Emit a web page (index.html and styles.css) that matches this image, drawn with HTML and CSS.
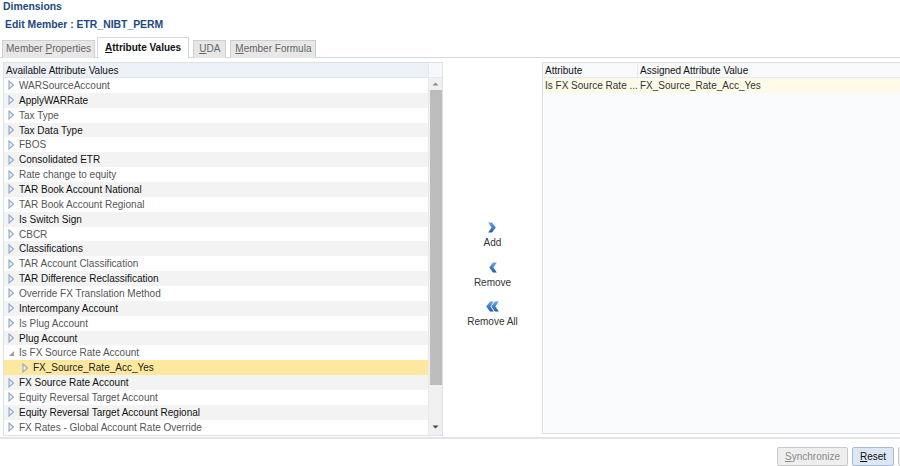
FILE: index.html
```html
<!DOCTYPE html>
<html>
<head>
<meta charset="utf-8">
<link rel="stylesheet" href="styles.css">
</head>
<body>
<div class="page">
  <div class="title">Dimensions</div>
  <div class="subtitle">Edit Member : ETR_NIBT_PERM</div>
  <div class="tabs">
    <div class="tab first">Member <u>P</u>roperties</div>
    <div class="tab active"><u>A</u>ttribute Values</div>
    <div class="tab uda"><u>U</u>DA</div>
    <div class="tab"><u>M</u>ember Formula</div>
  </div>
  <div class="main">
    <div class="left">
      <div class="listcol">
        <div class="lhead">Available Attribute Values</div>
        <div class="rows">
          <div class="row"><svg class="arr" width="7" height="10" viewBox="0 0 7 10"><path d="M1 1 L5.5 5 L1 9 Z" fill="#eaf1f9" stroke="#8fa9c8" stroke-width="1.1"/></svg><span>WARSourceAccount</span></div>
          <div class="row alt"><svg class="arr" width="7" height="10" viewBox="0 0 7 10"><path d="M1 1 L5.5 5 L1 9 Z" fill="#eaf1f9" stroke="#8fa9c8" stroke-width="1.1"/></svg><span>ApplyWARRate</span></div>
          <div class="row"><svg class="arr" width="7" height="10" viewBox="0 0 7 10"><path d="M1 1 L5.5 5 L1 9 Z" fill="#eaf1f9" stroke="#8fa9c8" stroke-width="1.1"/></svg><span>Tax Type</span></div>
          <div class="row alt"><svg class="arr" width="7" height="10" viewBox="0 0 7 10"><path d="M1 1 L5.5 5 L1 9 Z" fill="#eaf1f9" stroke="#8fa9c8" stroke-width="1.1"/></svg><span>Tax Data Type</span></div>
          <div class="row"><svg class="arr" width="7" height="10" viewBox="0 0 7 10"><path d="M1 1 L5.5 5 L1 9 Z" fill="#eaf1f9" stroke="#8fa9c8" stroke-width="1.1"/></svg><span>FBOS</span></div>
          <div class="row alt"><svg class="arr" width="7" height="10" viewBox="0 0 7 10"><path d="M1 1 L5.5 5 L1 9 Z" fill="#eaf1f9" stroke="#8fa9c8" stroke-width="1.1"/></svg><span>Consolidated ETR</span></div>
          <div class="row"><svg class="arr" width="7" height="10" viewBox="0 0 7 10"><path d="M1 1 L5.5 5 L1 9 Z" fill="#eaf1f9" stroke="#8fa9c8" stroke-width="1.1"/></svg><span>Rate change to equity</span></div>
          <div class="row alt"><svg class="arr" width="7" height="10" viewBox="0 0 7 10"><path d="M1 1 L5.5 5 L1 9 Z" fill="#eaf1f9" stroke="#8fa9c8" stroke-width="1.1"/></svg><span>TAR Book Account National</span></div>
          <div class="row"><svg class="arr" width="7" height="10" viewBox="0 0 7 10"><path d="M1 1 L5.5 5 L1 9 Z" fill="#eaf1f9" stroke="#8fa9c8" stroke-width="1.1"/></svg><span>TAR Book Account Regional</span></div>
          <div class="row alt"><svg class="arr" width="7" height="10" viewBox="0 0 7 10"><path d="M1 1 L5.5 5 L1 9 Z" fill="#eaf1f9" stroke="#8fa9c8" stroke-width="1.1"/></svg><span>Is Switch Sign</span></div>
          <div class="row"><svg class="arr" width="7" height="10" viewBox="0 0 7 10"><path d="M1 1 L5.5 5 L1 9 Z" fill="#eaf1f9" stroke="#8fa9c8" stroke-width="1.1"/></svg><span>CBCR</span></div>
          <div class="row alt"><svg class="arr" width="7" height="10" viewBox="0 0 7 10"><path d="M1 1 L5.5 5 L1 9 Z" fill="#eaf1f9" stroke="#8fa9c8" stroke-width="1.1"/></svg><span>Classifications</span></div>
          <div class="row"><svg class="arr" width="7" height="10" viewBox="0 0 7 10"><path d="M1 1 L5.5 5 L1 9 Z" fill="#eaf1f9" stroke="#8fa9c8" stroke-width="1.1"/></svg><span>TAR Account Classification</span></div>
          <div class="row alt"><svg class="arr" width="7" height="10" viewBox="0 0 7 10"><path d="M1 1 L5.5 5 L1 9 Z" fill="#eaf1f9" stroke="#8fa9c8" stroke-width="1.1"/></svg><span>TAR Difference Reclassification</span></div>
          <div class="row"><svg class="arr" width="7" height="10" viewBox="0 0 7 10"><path d="M1 1 L5.5 5 L1 9 Z" fill="#eaf1f9" stroke="#8fa9c8" stroke-width="1.1"/></svg><span>Override FX Translation Method</span></div>
          <div class="row alt"><svg class="arr" width="7" height="10" viewBox="0 0 7 10"><path d="M1 1 L5.5 5 L1 9 Z" fill="#eaf1f9" stroke="#8fa9c8" stroke-width="1.1"/></svg><span>Intercompany Account</span></div>
          <div class="row"><svg class="arr" width="7" height="10" viewBox="0 0 7 10"><path d="M1 1 L5.5 5 L1 9 Z" fill="#eaf1f9" stroke="#8fa9c8" stroke-width="1.1"/></svg><span>Is Plug Account</span></div>
          <div class="row alt"><svg class="arr" width="7" height="10" viewBox="0 0 7 10"><path d="M1 1 L5.5 5 L1 9 Z" fill="#eaf1f9" stroke="#8fa9c8" stroke-width="1.1"/></svg><span>Plug Account</span></div>
          <div class="row"><svg class="arr" width="7" height="10" viewBox="0 0 7 10"><path d="M6 3 L6 8 L1 8 Z" fill="#a0a0a0"/></svg><span>Is FX Source Rate Account</span></div>
          <div class="row sel child"><svg class="arr" width="7" height="10" viewBox="0 0 7 10"><path d="M1 1 L5.5 5 L1 9 Z" fill="#f6efd0" stroke="#8fa9c8" stroke-width="1.1"/></svg><span>FX_Source_Rate_Acc_Yes</span></div>
          <div class="row alt"><svg class="arr" width="7" height="10" viewBox="0 0 7 10"><path d="M1 1 L5.5 5 L1 9 Z" fill="#eaf1f9" stroke="#8fa9c8" stroke-width="1.1"/></svg><span>FX Source Rate Account</span></div>
          <div class="row"><svg class="arr" width="7" height="10" viewBox="0 0 7 10"><path d="M1 1 L5.5 5 L1 9 Z" fill="#eaf1f9" stroke="#8fa9c8" stroke-width="1.1"/></svg><span>Equity Reversal Target Account</span></div>
          <div class="row alt"><svg class="arr" width="7" height="10" viewBox="0 0 7 10"><path d="M1 1 L5.5 5 L1 9 Z" fill="#eaf1f9" stroke="#8fa9c8" stroke-width="1.1"/></svg><span>Equity Reversal Target Account Regional</span></div>
          <div class="row"><svg class="arr" width="7" height="10" viewBox="0 0 7 10"><path d="M1 1 L5.5 5 L1 9 Z" fill="#eaf1f9" stroke="#8fa9c8" stroke-width="1.1"/></svg><span>FX Rates - Global Account Rate Override</span></div>
        </div>
      </div>
      <div class="scroll">
        <div class="shead"></div>
        <div class="strack">
          <svg class="sarrow" width="7" height="8" viewBox="0 0 7 8"><path d="M0.5 5.5 L3.5 2.5 L6.5 5.5 Z" fill="#8a8a8a"/></svg>
          <div class="thumb"></div>
          <div class="sfill"></div>
          <svg class="sarrow" width="7" height="8" viewBox="0 0 7 8"><path d="M0.5 2.5 L3.5 5.5 L6.5 2.5 Z" fill="#444"/></svg>
        </div>
      </div>
    </div>
    <div class="mid">
      <div class="mbtn">
        <svg width="8" height="11" viewBox="0 0 8 11"><defs><linearGradient id="g1" x1="0" y1="0" x2="0" y2="1"><stop offset="0" stop-color="#6aa6e6"/><stop offset="1" stop-color="#1d5cab"/></linearGradient></defs><path d="M0.2 0.5 L4 0.5 L7.8 5.5 L4 10.5 L0.2 10.5 L3.6 5.5 Z" fill="url(#g1)"/></svg>
        <span>Add</span>
      </div>
      <div class="mbtn">
        <svg width="8" height="11" viewBox="0 0 8 11"><defs><linearGradient id="g2" x1="0" y1="0" x2="0" y2="1"><stop offset="0" stop-color="#6aa6e6"/><stop offset="1" stop-color="#1d5cab"/></linearGradient></defs><path d="M7.8 0.5 L4 0.5 L0.2 5.5 L4 10.5 L7.8 10.5 L4.4 5.5 Z" fill="url(#g2)"/></svg>
        <span>Remove</span>
      </div>
      <div class="mbtn">
        <svg width="13" height="11" viewBox="0 0 13 11"><defs><linearGradient id="g3" x1="0" y1="0" x2="0" y2="1"><stop offset="0" stop-color="#6aa6e6"/><stop offset="1" stop-color="#1d5cab"/></linearGradient></defs><path d="M7.8 0.5 L4 0.5 L0.2 5.5 L4 10.5 L7.8 10.5 L4.4 5.5 Z M12.8 0.5 L9 0.5 L5.2 5.5 L9 10.5 L12.8 10.5 L9.4 5.5 Z" fill="url(#g3)"/></svg>
        <span>Remove All</span>
      </div>
    </div>
    <div class="right">
      <div class="rhead">
        <div class="c1">Attribute</div>
        <div class="c2">Assigned Attribute Value</div>
      </div>
      <div class="rrow">
        <div class="c1">Is FX Source Rate ...</div>
        <div class="c2">FX_Source_Rate_Acc_Yes</div>
      </div>
    </div>
  </div>
  <div class="footer">
    <div class="btn disabled"><u>S</u>ynchronize</div>
    <div class="btn primary"><u>R</u>eset</div>
    <div class="btn edge"></div>
  </div>
</div>
</body>
</html>
```
FILE: styles.css
```css
* { box-sizing: border-box; }
html, body { margin: 0; padding: 0; background: #fff; }
body {
  width: 900px;
  height: 466px;
  overflow: hidden;
  font-family: "Liberation Sans", Arial, sans-serif;
  font-size: 10px;
  color: #222;
}
.page { display: flex; flex-direction: column; }
.title {
  font-weight: bold;
  font-size: 10.4px;
  line-height: 13px;
  color: #1c4a7e;
  padding-left: 3px;
}
.subtitle {
  font-weight: bold;
  font-size: 10.4px;
  line-height: 13px;
  color: #1c4a7e;
  padding-left: 5px;
  margin-top: 5px;
}
.tabs {
  display: flex;
  align-items: flex-end;
  gap: 4px;
  height: 20px;
  margin-top: 7px;
  padding-left: 2px;
  border-bottom: 1px solid #d3d8de;
}
.tab {
  height: 18px;
  line-height: 16px;
  padding: 0 4px;
  background: #e7e7e7;
  border: 1px solid #cfcfcf;
  border-bottom: none;
  color: #666;
  margin-bottom: -1px;
}
.tab.first { margin-right: -2px; padding: 0 3px; }
.tab.uda { padding: 0 5px; }
.tab.active {
  height: 21px;
  line-height: 20px;
  padding: 0 7px;
  background: #fff;
  color: #111;
  font-weight: bold;
  border-color: #d3d8de;
}
.main {
  display: flex;
  margin-top: 4px;
  height: 375px;
}
.left {
  margin-left: 3px;
  width: 440px;
  height: 374px;
  border: 1px solid #dbe1e8;
  display: flex;
}
.listcol { flex: 1; display: flex; flex-direction: column; }
.lhead {
  height: 15px;
  line-height: 15px;
  padding-left: 2px;
  background: #ecf1f7;
  color: #111;
  border-bottom: 1px solid #e1e6ec;
}
.rows { display: flex; flex-direction: column; }
.row {
  height: 14.87px;
  display: flex;
  align-items: center;
  padding-left: 4px;
  color: #555;
  white-space: nowrap;
}
.row .arr { margin-right: 4px; flex: none; }
.row.alt { background: #f3f3f3; color: #111; }
.row.sel { background: #fce89f; color: #222; }
.row.child { padding-left: 18px; }
.scroll {
  width: 14px;
  display: flex;
  flex-direction: column;
  border-left: 1px solid #e6e9ee;
}
.shead { height: 15px; background: #f6f8fb; border-bottom: 1px solid #e6e9ee; }
.strack {
  flex: 1;
  background: #f0f0f0;
  display: flex;
  flex-direction: column;
  align-items: center;
  padding: 2px 0 4px;
}
.sarrow { flex: none; }
.thumb {
  width: 12px;
  height: 295px;
  background: #bdbdbd;
  margin-top: 2px;
}
.sfill { flex: 1; }
.mid {
  width: 99px;
  display: flex;
  flex-direction: column;
  align-items: center;
  padding-top: 160px;
  gap: 12.5px;
}
.mbtn {
  display: flex;
  flex-direction: column;
  align-items: center;
  gap: 3px;
  color: #333;
  line-height: 13px;
}
.right {
  flex: 1;
  height: 372px;
  border: 1px solid #dbe1e8;
  border-right: none;
  background: #fafbfd;
}
.rhead, .rrow { display: flex; height: 15px; line-height: 15px; }
.rhead { background: #f7f9fb; border-bottom: 1px solid #e6e9ee; color: #111; }
.rrow { background: #fdfbe8; color: #333; }
.c1 { width: 95px; padding-left: 2px; border-right: 1px solid #e6e9ee; white-space: nowrap; overflow: hidden; }
.rrow .c1 { border-right: none; }
.c2 { padding-left: 2px; white-space: nowrap; }
.footer {
  border-top: 2px solid #e1e5ea;
  display: flex;
  justify-content: flex-end;
  gap: 4px;
  padding-top: 8px;
  margin-right: -14px;
}
.btn {
  height: 19px;
  line-height: 17px;
  padding: 0 7px;
  border: 1px solid #c9c9c9;
  border-radius: 2px;
}
.btn.disabled { background: #eeeeee; color: #8a8a8a; width: 71px; text-align: center; }
.btn.primary { background: #dce7f3; border-color: #a7bcd4; color: #111; width: 42px; text-align: center; }
.btn.edge { width: 16px; background: #eee; }
```
